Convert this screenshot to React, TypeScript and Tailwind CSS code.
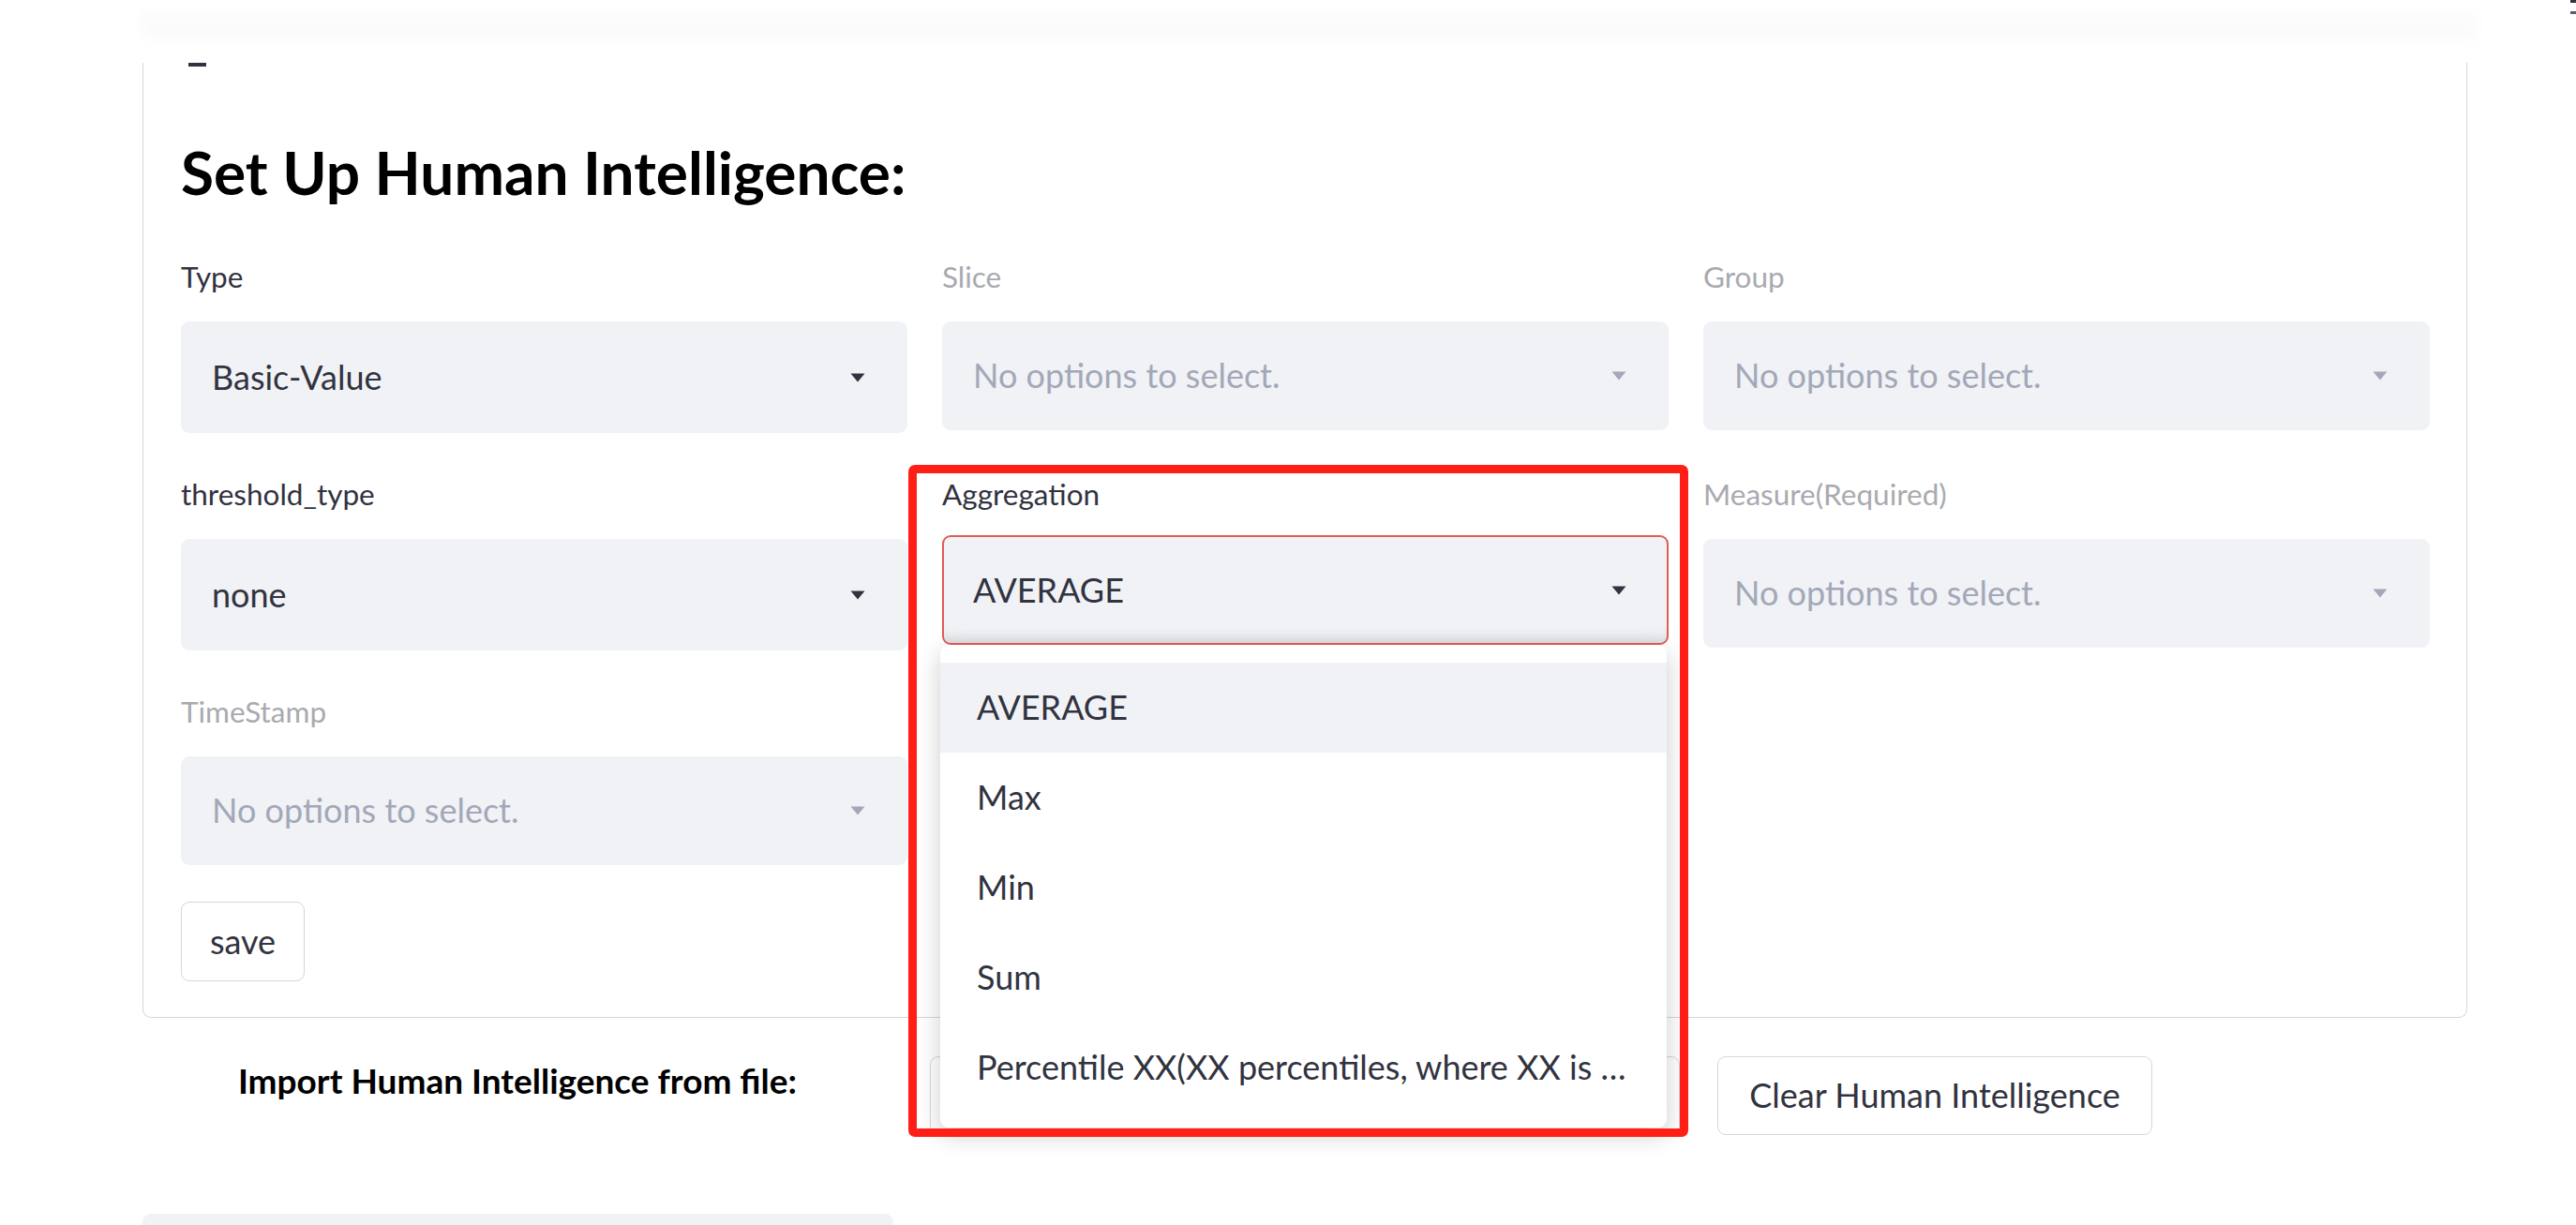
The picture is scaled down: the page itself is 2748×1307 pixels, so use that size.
import React from "react";

type FieldProps = {
  label: string;
  value?: string;
  disabled?: boolean;
};

function Caret({ muted }: { muted?: boolean }) {
  return (
    <svg
      width="16"
      height="10"
      viewBox="0 0 16 10"
      className={muted ? "shrink-0 fill-[#a3a8b8]" : "shrink-0 fill-[#31333f]"}
    >
      <path d="M0.5 0.5h15L8 9.5z" strokeLinejoin="round" />
    </svg>
  );
}

function SelectField({ label, value, disabled }: FieldProps) {
  return (
    <div>
      <div
        className={`h-[66px] text-[31.5px] leading-[1.2] ${
          disabled ? "text-[#a9aab0]" : "text-[#31333f]"
        }`}
      >
        {label}
      </div>
      <div
        className={`flex items-center justify-between rounded-[9px] bg-[#f0f2f6] pl-[33px] pr-[45px] ${
          disabled ? "h-[116px]" : "h-[119px]"
        }`}
      >
        <span
          className={`text-[36px] leading-[1.2] ${
            disabled ? "text-[#a3a8b8]" : "text-[#31333f]"
          }`}
        >
          {disabled ? "No options to select." : value}
        </span>
        <Caret muted={disabled} />
      </div>
    </div>
  );
}

const aggregationOptions = [
  "AVERAGE",
  "Max",
  "Min",
  "Sum",
  "Percentile XX(XX percentiles, where XX is …",
];

function AggregationField() {
  return (
    <div className="relative">
      <div className="h-[62px] text-[31.5px] leading-[1.2] text-[#31333f]">
        Aggregation
      </div>
      <div className="flex h-[117px] items-center justify-between rounded-[9px] border-2 border-[#e25c56] bg-[#f0f2f6] pl-[31px] pr-[43px] shadow-[inset_0_-16px_14px_-12px_rgba(0,0,0,0.1)]">
        <span className="text-[36px] leading-[1.2] text-[#31333f]">AVERAGE</span>
        <Caret />
      </div>

      {/* open dropdown */}
      <div className="absolute left-[-2px] top-[179px] z-10 w-[775px] rounded-[9px] bg-white pt-[19px] pb-[16px] shadow-[0_8px_26px_rgba(0,0,0,0.2)]">
        {aggregationOptions.map((opt, i) => (
          <div
            key={opt}
            className={`flex h-[96px] items-center whitespace-nowrap pl-[39px] text-[36px] leading-[1.2] text-[#31333f] ${
              i === 0 ? "bg-[#f0f2f6]" : "bg-white"
            }`}
          >
            {opt}
          </div>
        ))}
      </div>

      {/* annotation box */}
      <div className="pointer-events-none absolute left-[-36px] top-[-13px] z-20 h-[717px] w-[832px] rounded-[7px] border-[9px] border-[#ff1f16]" />
    </div>
  );
}

export default function App() {
  return (
    <div className="relative h-[1307px] w-[2748px] overflow-hidden bg-white font-[Lato,sans-serif]">
      <div className="absolute right-0 top-0 h-[3px] w-[6px] bg-[#31333f]" />
      <div className="absolute right-0 top-[12px] h-[3px] w-[6px] bg-[#5a5c66]" />

      <div className="h-[62px] pt-[12px]">
        <div className="ml-[150px] h-[30px] w-[2492px] bg-[#fbfbfb] blur-[6px]" />
      </div>

      <div className="ml-[152px] w-[2480px] rounded-b-[9px] border-x border-b border-[#d6d6d9] pl-[40px] pr-[39px] pb-[38px]">
        <div className="ml-[8px] mt-[5px] h-[4px] w-[19px] bg-[#31333f]" />
        <h1 className="mt-[81px] text-[64px] font-bold leading-none text-black">
          Set Up Human Intelligence:
        </h1>

        <div className="mt-[61px] grid grid-cols-3 items-start gap-x-[37px] gap-y-[47px]">
          <SelectField label="Type" value="Basic-Value" />
          <SelectField label="Slice" disabled />
          <SelectField label="Group" disabled />

          <SelectField label="threshold_type" value="none" />
          <AggregationField />
          <SelectField label="Measure(Required)" disabled />

          <SelectField label="TimeStamp" disabled />
        </div>

        <button className="mt-[39px] flex h-[85px] w-[132px] items-center justify-center rounded-[9px] border border-[#d6d6d9] bg-white text-[36px] leading-[1.2] text-[#31333f]">
          save
        </button>
      </div>

      <div className="ml-[152px] mt-[41px] grid w-[2480px] grid-cols-3 gap-x-[40px]">
        <div className="flex justify-center pt-[4px]">
          <span className="text-[37px] font-bold leading-[1.2] text-black">
            Import Human Intelligence from file:
          </span>
        </div>
        <div className="h-[84px] rounded-[9px] border border-[#d6d6d9]" />
        <div>
          <button className="flex h-[84px] w-[464px] items-center justify-center rounded-[9px] border border-[#d6d6d9] bg-white text-[36px] leading-[1.2] text-[#31333f]">
            Clear Human Intelligence
          </button>
        </div>
      </div>

      <div className="ml-[152px] mt-[84px] h-[40px] w-[801px] rounded-t-[9px] bg-[#f0f2f6]" />
    </div>
  );
}
